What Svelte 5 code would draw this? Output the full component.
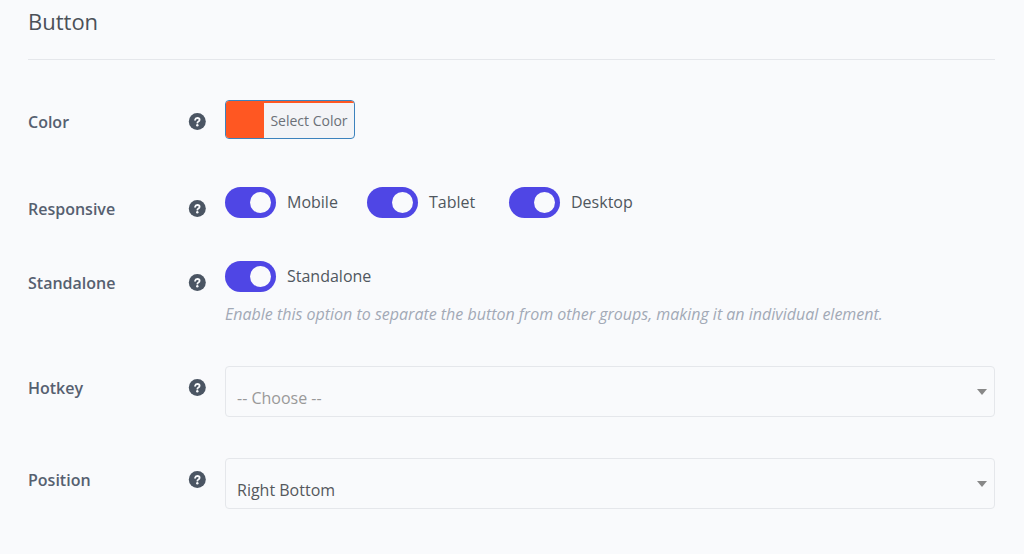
<script>
  let devices = $state([
    { name: 'Mobile', on: true },
    { name: 'Tablet', on: true },
    { name: 'Desktop', on: true }
  ]);
  let standalone = $state(true);
  let hotkey = $state('');
  let position = $state('right-bottom');
  let color = '#ff5722';
</script>

{#snippet help(topic)}
  <button class="help" type="button" aria-label={`Help: ${topic}`}>
    <svg viewBox="0 0 18 18" aria-hidden="true">
      <circle cx="9.3" cy="8.6" r="8.5" fill="#4b5563" />
      <path d="M7.1 6.8C7.3 5.7 8.1 5 9.3 5c1.4 0 2.3.7 2.3 1.8 0 .9-.5 1.3-1.2 1.7-.7.4-1 .6-1 1.2" fill="none" stroke="#f9fafc" stroke-width="1.8" stroke-linecap="round" />
      <circle cx="9.3" cy="12.3" r="1.2" fill="#f9fafc" />
    </svg>
  </button>
{/snippet}

<main>
  <h2>Button</h2>
  <form>
    <div class="row">
      <span class="label" id="color-label">Color</span>
      {@render help('Color')}
      <div class="control color">
        <button class="picker" type="button" aria-describedby="color-label">
          <span class="swatch" style:background={color}></span>
          <span class="picker-text" style:border-color={color}>Select Color</span>
        </button>
      </div>
    </div>

    <div class="row">
      <span class="label" id="responsive-label">Responsive</span>
      {@render help('Responsive')}
      <div class="control switches" role="group" aria-labelledby="responsive-label">
        {#each devices as device}
          <label class="switch">
            <input type="checkbox" bind:checked={device.on} />
            <span>{device.name}</span>
          </label>
        {/each}
      </div>
    </div>

    <div class="row">
      <span class="label" id="standalone-label">Standalone</span>
      {@render help('Standalone')}
      <div class="control" role="group" aria-labelledby="standalone-label">
        <label class="switch">
          <input type="checkbox" bind:checked={standalone} aria-describedby="standalone-note" />
          <span>Standalone</span>
        </label>
        <p id="standalone-note">Enable this option to separate the button from other groups, making it an individual element.</p>
      </div>
    </div>

    <div class="row">
      <label class="label" for="hotkey">Hotkey</label>
      {@render help('Hotkey')}
      <div class="control select">
        <select id="hotkey" class:placeholder={hotkey === ''} bind:value={hotkey}>
          <option value="">-- Choose --</option>
        </select>
        <svg class="arrow" viewBox="0 0 10 6" aria-hidden="true"><path d="M0 0h10L5 6z" fill="#888" /></svg>
      </div>
    </div>

    <div class="row">
      <label class="label" for="position">Position</label>
      {@render help('Position')}
      <div class="control select">
        <select id="position" bind:value={position}>
          <option value="right-bottom">Right Bottom</option>
        </select>
        <svg class="arrow" viewBox="0 0 10 6" aria-hidden="true"><path d="M0 0h10L5 6z" fill="#888" /></svg>
      </div>
    </div>
  </form>
</main>

<style>
  :global(body) {
    margin: 0;
    background: #f9fafc;
  }
  main {
    padding: 7px 29px 40px 28px;
    color: #50575e;
    font: 16px/22px "Segoe UI", "Open Sans", "Noto Sans", sans-serif;
  }
  h2 {
    margin: 0;
    padding-bottom: 24px;
    border-bottom: 1px solid #e5e7eb;
    color: #4b5158;
    font-size: 22px;
    font-weight: 400;
    line-height: 28px;
  }
  form {
    display: grid;
    gap: 41px;
    padding-top: 40px;
  }
  .row {
    display: grid;
    grid-template-columns: 160px 18px minmax(0, 1fr);
    align-items: start;
  }
  .label {
    padding-top: 11px;
    color: #566070;
    font-weight: 600;
  }
  .help {
    display: block;
    width: 18px;
    height: 18px;
    margin-top: 13px;
    padding: 0;
    border: 0;
    background: none;
    cursor: help;
  }
  .help svg {
    display: block;
  }
  .control {
    margin-left: 19px;
  }
  .color {
    padding-bottom: 7px;
  }
  .picker {
    display: flex;
    width: 130px;
    height: 39px;
    padding: 0;
    overflow: hidden;
    border: 1px solid #3c82bd;
    border-radius: 4px;
    background: #f3f4f7;
    color: #6b7078;
    font: inherit;
    font-size: 14px;
    cursor: pointer;
  }
  .swatch {
    width: 38px;
    height: 100%;
  }
  .picker-text {
    flex: 1;
    height: 100%;
    box-sizing: border-box;
    border-top: 2px solid;
    line-height: 36px;
  }
  .switches {
    display: grid;
    grid-template-columns: repeat(3, 142px);
  }
  .switch {
    display: flex;
    align-items: center;
    gap: 11px;
    height: 31px;
  }
  .switch span {
    padding-bottom: 2px;
  }
  .switch input {
    appearance: none;
    flex: none;
    display: flex;
    align-items: center;
    width: 51px;
    height: 31px;
    margin: 0;
    padding: 0 5px;
    box-sizing: border-box;
    border-radius: 16px;
    background: #c3c7d0;
    cursor: pointer;
  }
  .switch input::before {
    content: "";
    width: 21px;
    height: 21px;
    border-radius: 50%;
    background: #f9fafc;
  }
  .switch input:checked {
    justify-content: flex-end;
    background: #4f46e5;
  }
  p {
    margin: 11px 0 0;
    color: #a2a9b6;
    font-style: italic;
  }
  .select {
    display: grid;
    align-items: center;
  }
  select,
  .arrow {
    grid-area: 1 / 1;
  }
  select {
    appearance: none;
    width: 100%;
    height: 51px;
    padding: 13px 32px 0 11px;
    box-sizing: border-box;
    border: 1px solid #e5e7eb;
    border-radius: 4px;
    background: transparent;
    color: #55585c;
    font: inherit;
  }
  select.placeholder {
    color: #999;
  }
  .arrow {
    justify-self: end;
    width: 10px;
    height: 6px;
    margin-right: 8px;
    pointer-events: none;
  }
</style>
